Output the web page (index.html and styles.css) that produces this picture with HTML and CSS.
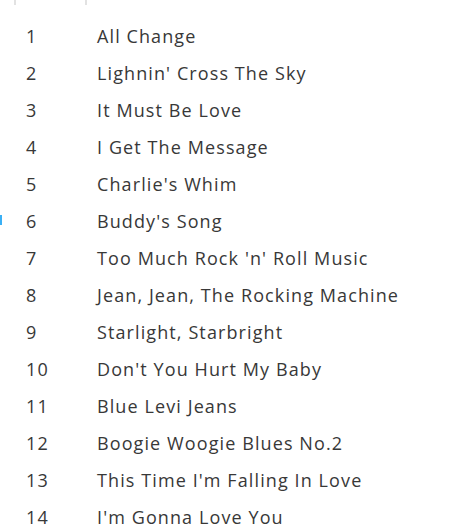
FILE: index.html
```html
<!DOCTYPE html>
<html lang="en">
<head>
    <meta charset="UTF-8">
    <title>Track List</title>
    <link rel="stylesheet" href="styles.css">
</head>
<body>
    <div class="header">
        <span class="divider first"></span>
        <span class="divider second"></span>
    </div>
    <ul class="tracks">
        <li class="track"><span class="num">1</span><span class="title">All Change</span></li>
        <li class="track"><span class="num">2</span><span class="title">Lighnin' Cross The Sky</span></li>
        <li class="track"><span class="num">3</span><span class="title">It Must Be Love</span></li>
        <li class="track"><span class="num">4</span><span class="title">I Get The Message</span></li>
        <li class="track"><span class="num">5</span><span class="title">Charlie's Whim</span></li>
        <li class="track current"><span class="num">6</span><span class="title">Buddy's Song</span></li>
        <li class="track"><span class="num">7</span><span class="title">Too Much Rock 'n' Roll Music</span></li>
        <li class="track"><span class="num">8</span><span class="title">Jean, Jean, The Rocking Machine</span></li>
        <li class="track"><span class="num">9</span><span class="title">Starlight, Starbright</span></li>
        <li class="track"><span class="num">10</span><span class="title">Don't You Hurt My Baby</span></li>
        <li class="track"><span class="num">11</span><span class="title">Blue Levi Jeans</span></li>
        <li class="track"><span class="num">12</span><span class="title">Boogie Woogie Blues No.2</span></li>
        <li class="track"><span class="num">13</span><span class="title">This Time I'm Falling In Love</span></li>
        <li class="track"><span class="num">14</span><span class="title">I'm Gonna Love You</span></li>
    </ul>
</body>
</html>
```

FILE: styles.css
```css
body {
    margin: 0;
    background: #ffffff;
    font-family: 'Open Sans', 'DejaVu Sans', sans-serif;
    color: #383838;
    overflow: hidden;
}
.header {
    display: flex;
    height: 5px;
    padding-left: 14px;
}
.divider {
    width: 2px;
    height: 5px;
    background: #e2e2e2;
}
.divider.second {
    margin-left: 69px;
}
.tracks {
    list-style: none;
    margin: 0;
    padding: 13px 0 0 0;
}
.track {
    display: flex;
    height: 37px;
    line-height: 37px;
    font-size: 18px;
    letter-spacing: 1.1px;
    position: relative;
}
.num {
    width: 97px;
    padding-left: 26px;
    box-sizing: border-box;
}
.title {
    font-weight: 500;
}
.current::before {
    content: '';
    position: absolute;
    left: 0;
    top: 12px;
    width: 2px;
    height: 10px;
    background: #3ab0f5;
}
```
